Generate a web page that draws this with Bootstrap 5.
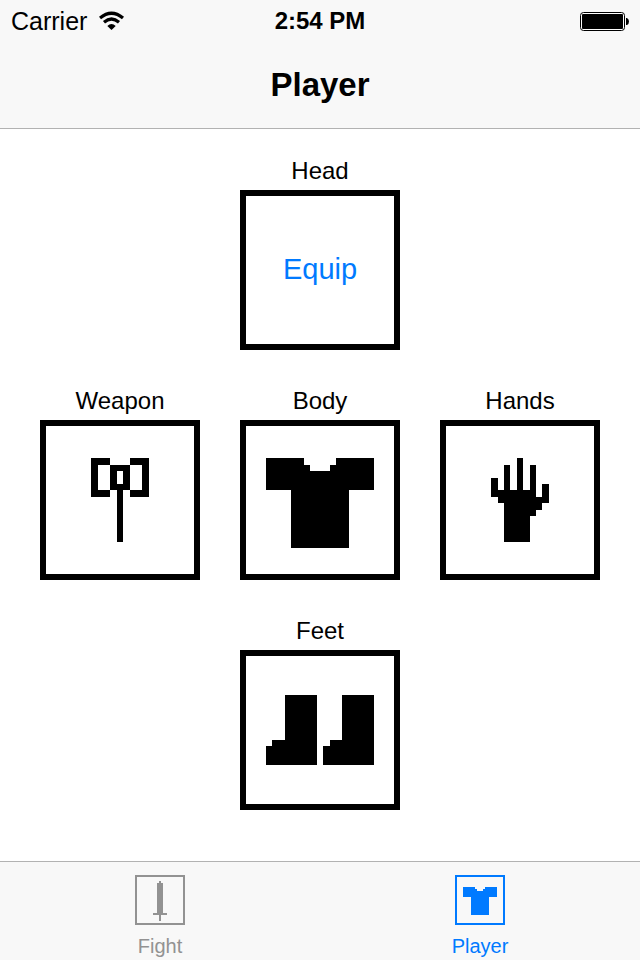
<!DOCTYPE html>
<html lang="en">
<head>
<meta charset="utf-8">
<meta name="viewport" content="width=device-width, initial-scale=1">
<title>Player</title>
<link href="https://cdn.jsdelivr.net/npm/bootstrap@5.3.0/dist/css/bootstrap.min.css" rel="stylesheet">
<style>
  body { font-family: "Liberation Sans", Arial, sans-serif; color: #000; background: #fff; font-size: 24px; }
  .app-header { background: #f8f8f8; border-bottom: 1px solid #b2b2b2; }
  .status-row { line-height: 42px; padding: 0 11px; }
  .carrier-name { font-size: 25px; }
  .page-title { font-size: 33px; line-height: 86px; font-weight: 700; }
  .equipment { max-width: 640px; padding: 27px 40px 20px; }
  .equipment .row { --bs-gutter-x: 40px; --bs-gutter-y: 36px; }
  .slot-label { line-height: 30px; margin-bottom: 4px; }
  .slot-box { aspect-ratio: 1; border: 6px solid #000; background: #fff; color: #000; padding: 0; font-size: 29px; }
  .slot-box.empty { color: #007aff; }
  .slot-box svg { width: 100%; height: 100%; }
  .tab-bar { background: #f8f8f8; border-top: 1px solid #b2b2b2; }
  .tab-item { color: #929292; font-size: 20px; line-height: 28px; padding-top: 13px; text-decoration: none; }
  .tab-item.active { color: #007aff; }
  .tab-item svg { border: 2px solid currentColor; margin-bottom: 7px; }
  svg { display: block; fill: currentColor; }
  .pixel-art { shape-rendering: crispEdges; }
</style>
</head>
<body class="d-flex flex-column min-vh-100">
  <header class="app-header text-center">
    <div class="status-row row g-0 align-items-center">
      <div class="col d-flex align-items-center gap-2">
        <span class="carrier-name">Carrier</span>
        <svg class="mx-1" width="26" height="20" viewBox="98 10 26 20" role="img" aria-label="Wi-Fi">
          <path d="M99 17Q110.500 7.500 122 17M103 21.200Q110.500 14.800 118 21.200" fill="none" stroke="#000" stroke-width="3.200"/>
          <path d="M106.300 25Q110.500 21 114.700 25L110.500 29z"/>
        </svg>
      </div>
      <div class="col-auto fw-bold">2:54 PM</div>
      <div class="col d-flex justify-content-end">
        <svg width="49" height="19" viewBox="0 0 49 19" role="img" aria-label="Battery full">
          <rect x=".5" y=".5" width="44" height="18" rx="3" fill="#fff" stroke="#000"/>
          <rect x="2" y="2" width="41" height="15" rx="1"/>
          <path d="M46 6h1q2 1 2 3.500t-2 3.500h-1z"/>
        </svg>
      </div>
    </div>
    <h1 class="page-title m-0">Player</h1>
  </header>

  <main class="equipment w-100 mx-auto flex-grow-1 text-center">
    <div class="row justify-content-center">
      <div class="col-4">
        <div class="slot-label" id="head">Head</div>
        <button type="button" class="slot-box empty w-100 d-block" aria-describedby="head">Equip</button>
      </div>
      <div class="w-100 m-0"></div>
      <div class="col-4">
        <div class="slot-label" id="weapon">Weapon</div>
        <button type="button" class="slot-box w-100 d-block" aria-labelledby="weapon">
          <svg class="pixel-art" viewBox="16 46 148 148"><path fill-rule="evenodd" d="M61 78h19v7H68v25h12v7H61zM100 78h19v39h-19v-7h12V85h-12zM80 85h20v25h-7v52h-6v-52h-7zM87 91v13h6V91z"/></svg>
        </button>
      </div>
      <div class="col-4">
        <div class="slot-label" id="torso">Body</div>
        <button type="button" class="slot-box w-100 d-block" aria-labelledby="torso">
          <svg class="pixel-art" viewBox="16 46 148 148"><path d="M36 78h38v7h6v6h20v-6h6v-7h38v32h-25v58H61v-58H36z"/></svg>
        </button>
      </div>
      <div class="col-4">
        <div class="slot-label" id="hands">Hands</div>
        <button type="button" class="slot-box w-100 d-block" aria-labelledby="hands">
          <svg class="pixel-art" viewBox="16 46 148 148"><path d="M61 98h7v12h6V85h6v25h7V78h6v32h7V85h6v32h6v-13h7v19h-7v7h-6v6h-6v26H74v-39h-6v-6h-7z"/></svg>
        </button>
      </div>
      <div class="col-4">
        <div class="slot-label" id="feet">Feet</div>
        <button type="button" class="slot-box w-100 d-block" aria-labelledby="feet">
          <svg class="pixel-art" viewBox="16 46 148 148"><path d="M55 85h32v70H36v-19h6v-6h13zM112 85h32v70H93v-19h7v-6h12z"/></svg>
        </button>
      </div>
    </div>
  </main>

  <nav class="tab-bar d-flex" aria-label="Sections">
    <a class="tab-item flex-fill w-50 d-flex flex-column align-items-center" href="#fight">
      <svg class="pixel-art" width="50" height="50" viewBox="27 27 46 46"><path d="M49 31h2v2h2v30h4v2h-6v6h-2v-6h-6v-2h4V33h2z"/></svg>
      Fight
    </a>
    <a class="tab-item active flex-fill w-50 d-flex flex-column align-items-center" href="#player" aria-current="page">
      <svg class="pixel-art" width="50" height="50" viewBox="26 27 46 46"><path d="M32 37h12v2h2v2h6v-2h2v-2h12v10h-8v18H40V47h-8z"/></svg>
      Player
    </a>
  </nav>
<script src="https://cdn.jsdelivr.net/npm/bootstrap@5.3.0/dist/js/bootstrap.bundle.min.js"></script>
</body>
</html>
